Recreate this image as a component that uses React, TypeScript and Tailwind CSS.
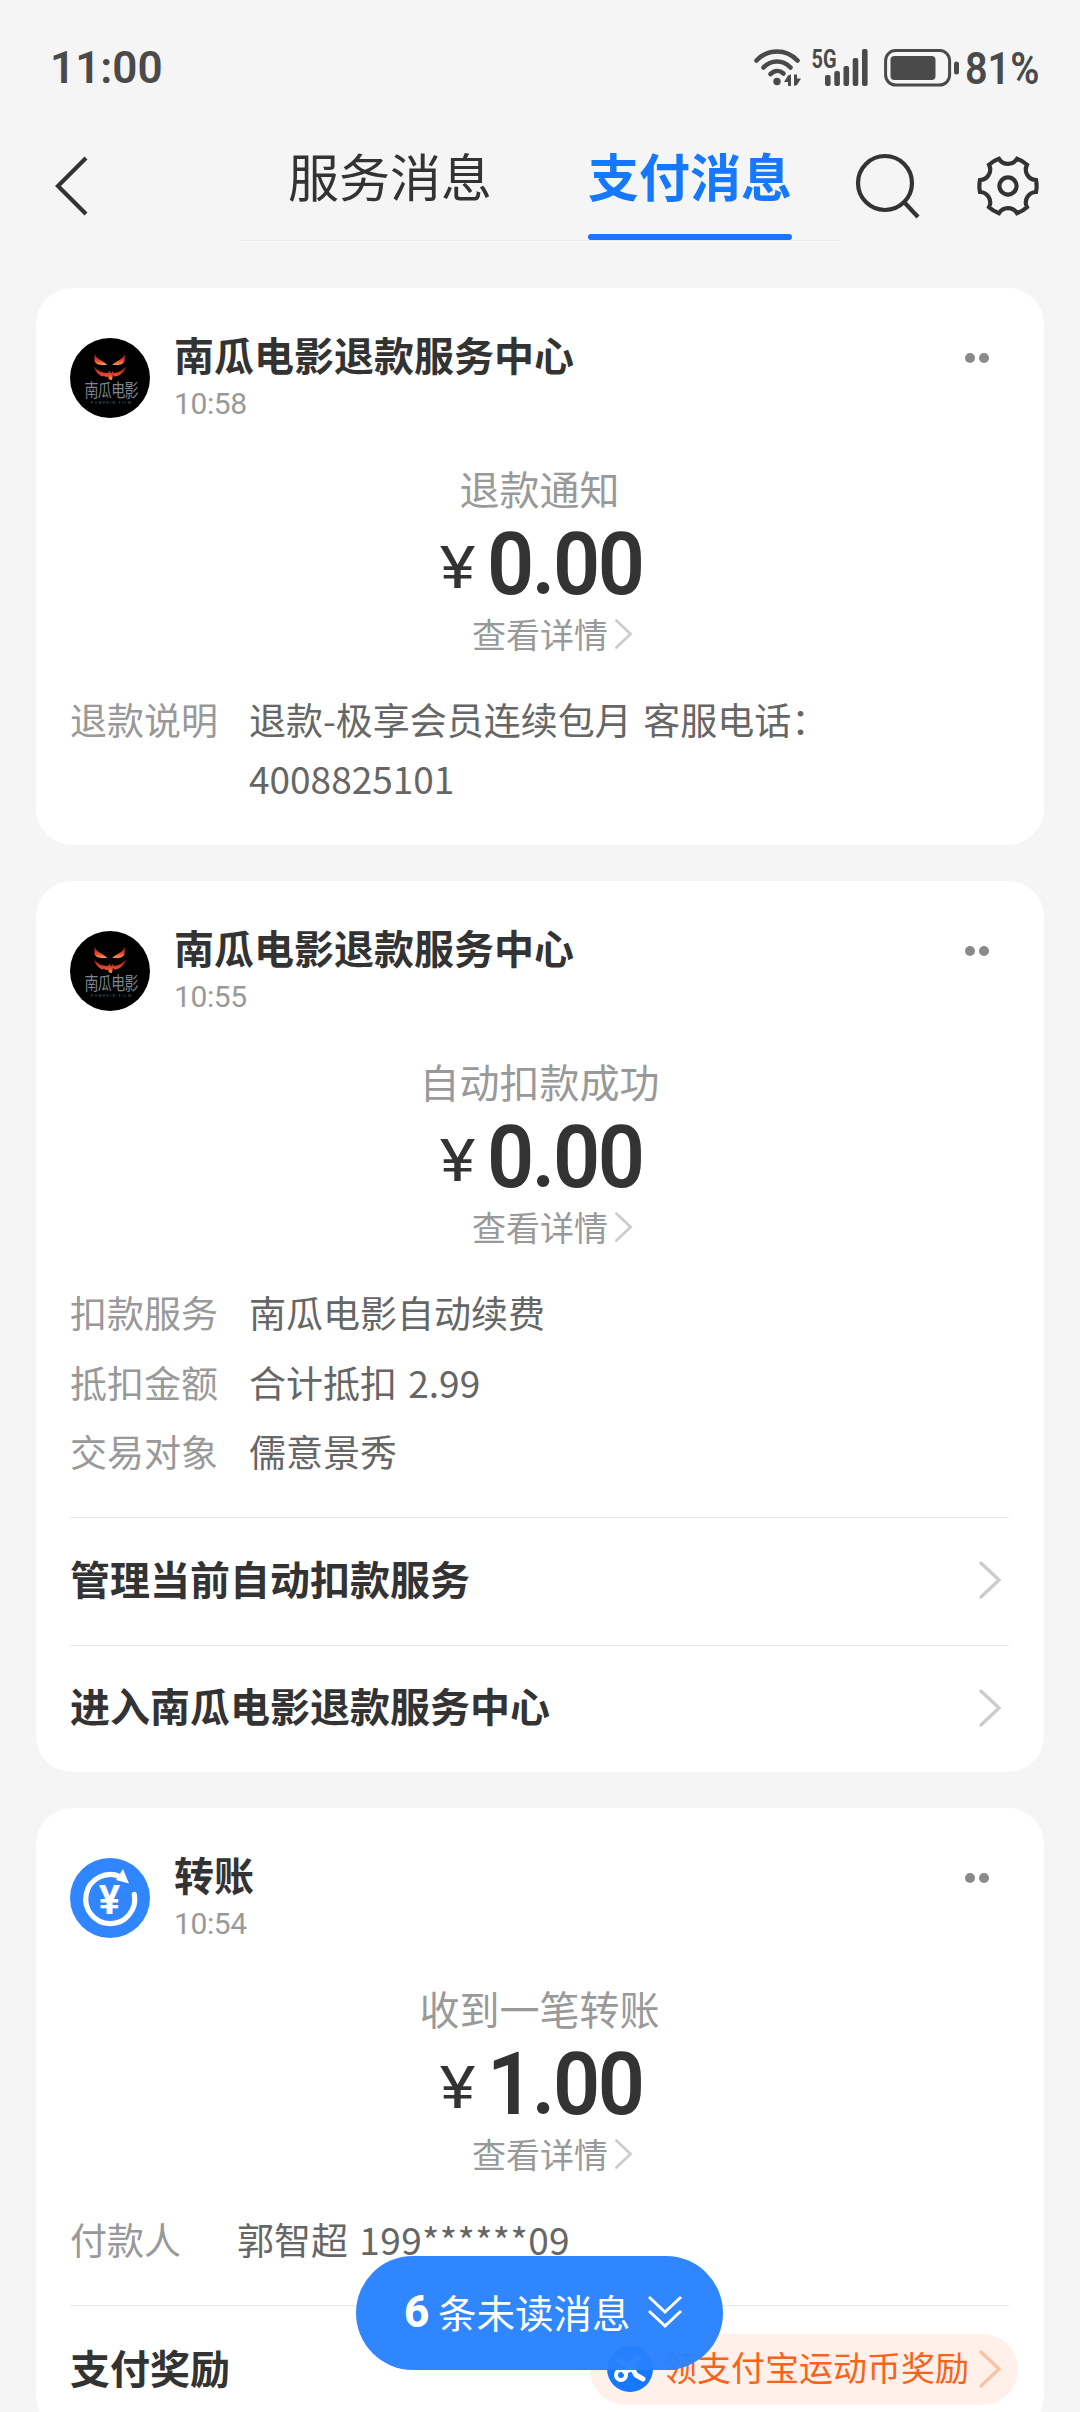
import type { ReactNode } from "react";

type Detail = { label: string; value: string };

type MessageCardProps = {
  icon: ReactNode;
  title: string;
  time: string;
  subject: string;
  amount: string;
  children: ReactNode;
};

function StatusBar() {
  return (
    <div className="flex h-[136px] items-center pl-[50px] text-[#4a4a4a]">
      <span className="w-[703px] font-['Roboto'] text-[44px] leading-none font-semibold">
        11:00
      </span>
      <svg className="h-[40px] w-[48px]" viewBox="0 0 48 40" fill="none">
        <g stroke="currentColor" strokeWidth="4.6" strokeLinecap="round">
          <path d="M3.5 12.5C15 0.5 33 0.5 44.5 12.5" />
          <path d="M10.5 19.5C18 11.5 30 11.5 37.5 19.5" />
          <path d="M17.5 26C21.5 22 26.5 22 30.5 25.5" />
        </g>
        <circle cx="24" cy="33.5" r="3.7" fill="currentColor" />
        <path d="M38 26.5V38H35V34H31L35 27.5Z" fill="currentColor" />
        <path d="M41 26.5H44V30.5H48L44 37L41 38Z" fill="currentColor" />
      </svg>
      <svg className="ml-[10px] h-[40px] w-[58px] overflow-visible" viewBox="0 0 58 40">
        <text
          x="0.5"
          y="19.5"
          textLength="25"
          lengthAdjust="spacingAndGlyphs"
          className="fill-current font-['Roboto'] text-[25px] font-bold"
        >
          5G
        </text>
        <g fill="currentColor">
          <rect x="14" y="27" width="5.6" height="11" rx="2" />
          <rect x="23.3" y="23" width="5.6" height="15" rx="2" />
          <rect x="32.5" y="18" width="5.6" height="20" rx="2" />
          <rect x="41.7" y="10" width="5.6" height="28" rx="2" />
          <rect x="51" y="1" width="5.6" height="37" rx="2" />
        </g>
      </svg>
      <svg className="ml-[15px] h-[38px] w-[76px]" viewBox="0 0 76 38">
        <rect
          x="1.6"
          y="1.6"
          width="64"
          height="34.4"
          rx="10"
          fill="none"
          stroke="currentColor"
          strokeWidth="3"
        />
        <rect x="6.5" y="7" width="45" height="24" rx="4" fill="currentColor" />
        <rect x="70" y="12.5" width="5" height="13" rx="2.5" fill="currentColor" />
      </svg>
      <span className="ml-[5px] origin-left scale-x-88 font-['Roboto'] text-[45px] leading-none font-semibold">
        81%
      </span>
    </div>
  );
}

function NavBar() {
  return (
    <div className="flex h-[105px] text-[#333333]">
      <svg
        className="mt-[20px] ml-[49px] h-[60px] w-[40px]"
        viewBox="0 0 40 60"
        fill="none"
        stroke="currentColor"
        strokeWidth="4.2"
      >
        <path d="M37 2L9 30L37 58" />
      </svg>
      <div className="ml-[151px] grid w-[600px] grid-cols-2 border-b border-[#ececec] text-center text-[51px] leading-[78px]">
        <div className="whitespace-nowrap">服务消息</div>
        <div className="flex flex-col items-center justify-between font-bold text-[#1677ff]">
          <span className="whitespace-nowrap">支付消息</span>
          <span className="h-[6px] w-[204px] rounded-full bg-[#1677ff]" />
        </div>
      </div>
      <svg
        className="mt-[15px] ml-[14px] h-[70px] w-[70px]"
        viewBox="0 0 70 70"
        fill="none"
        stroke="currentColor"
        strokeWidth="4.2"
      >
        <circle cx="31" cy="32" r="27" />
        <path d="M50 51L64 66" />
      </svg>
      <svg
        className="mt-[18px] ml-[52px] h-[64px] w-[64px]"
        viewBox="-32 -32 64 64"
        fill="none"
        stroke="currentColor"
        strokeWidth="4.2"
      >
        <path d="M-9-27.2A10.5 10.5 0 0 0 9-27.2A29 29 0 0 1 19-21.3A10.5 10.5 0 0 0 28-6A29 29 0 0 1 28 6A10.5 10.5 0 0 0 19 21.3A29 29 0 0 1 9 27.2A10.5 10.5 0 0 0-9 27.2A29 29 0 0 1-19 21.3A10.5 10.5 0 0 0-28 6A29 29 0 0 1-28-6A10.5 10.5 0 0 0-19-21.3A29 29 0 0 1-9-27.2Z" />
        <circle r="8.6" />
      </svg>
    </div>
  );
}

function PumpkinIcon() {
  return (
    <svg className="size-[80px]" viewBox="0 0 80 80">
      <defs>
        <linearGradient id="flame" x1="0" y1="0" x2="0" y2="1">
          <stop offset="0" stopColor="#8f1a12" />
          <stop offset="0.6" stopColor="#e8432a" />
          <stop offset="1" stopColor="#f59a52" />
        </linearGradient>
      </defs>
      <circle cx="40" cy="40" r="40" fill="#000000" />
      <g fill="url(#flame)">
        <path d="M24.5 15.5C26 21 32 22 37.5 27C33 27 26 27.5 24.5 23Z" />
        <path d="M55 15.5C53.5 21 48 22 42 27C47 27 53 27.5 54.5 23Z" />
        <path d="M24 28.5C29 34.5 35 35 38 35L39.5 32.5L41 35.5L42.5 33L43.5 35C48 34.5 52 33 56 28.5C54 35.5 48 38.5 44 38.5L43 36.5L42 42L39 41.5L38 38.5L35.5 39L34 37.5L32.5 38.5C28 36.5 25.5 34 24 28.5Z" />
      </g>
      <text
        x="14.5"
        y="46"
        transform="scale(1 1.28)"
        textLength="54"
        className="fill-[#7b8790] font-['Noto_Sans_CJK_SC'] text-[14px]"
      >
        南瓜电影
      </text>
      <text
        x="21"
        y="66"
        textLength="40"
        className="fill-[#5c6367] font-['Roboto'] text-[3.5px]"
      >
        PUMPKIN FILM
      </text>
    </svg>
  );
}

function TransferIcon() {
  return (
    <svg className="size-[80px]" viewBox="0 0 80 80" fill="none">
      <circle cx="40" cy="40" r="40" fill="#2f86ff" />
      <path
        d="M64.3 36.5A24.5 24.5 0 1 1 50 18.6"
        stroke="#ffffff"
        strokeWidth="5.2"
        strokeLinecap="round"
      />
      <path d="M53 11L59 25.5L46 22Z" fill="#ffffff" />
      <text
        x="39.5"
        y="55.500"
        textAnchor="middle"
        className="fill-white font-['Roboto'] text-[40px] font-bold"
      >
        ¥
      </text>
    </svg>
  );
}

function Chevron({ className }: { className: string }) {
  return (
    <svg
      className={className}
      viewBox="0 0 24 40"
      fill="none"
      stroke="currentColor"
      strokeWidth="3.4"
      strokeLinecap="round"
    >
      <path d="M3 3L21 20L3 37" />
    </svg>
  );
}

function MessageCard({ icon, title, time, subject, amount, children }: MessageCardProps) {
  return (
    <section className="rounded-[36px] bg-white pr-[35px] pl-[34px]">
      <header className="flex h-[130px] items-end">
        {icon}
        <div className="ml-[24px] flex-1">
          <h2 className="mb-[7px] text-[40px] leading-[50px] font-bold text-[#333333]">
            {title}
          </h2>
          <p className="mb-[-4px] font-['Roboto'] text-[30px] leading-[36px] tracking-[-0.4px] text-[#999999]">
            {time}
          </p>
        </div>
        <div className="mr-[20px] mb-[55px] flex gap-[4px]">
          <i className="size-[10px] rounded-full bg-[#8a8a8a]" />
          <i className="size-[10px] rounded-full bg-[#8a8a8a]" />
        </div>
      </header>

      <div className="mt-[40px] flex flex-col items-center">
        <p className="text-[40px] leading-[60px] text-[#999999]">{subject}</p>
        <div className="flex h-[88px] items-center gap-[14px] font-['Roboto'] text-[#333333]">
          <span className="mt-[10px] ml-[10px] scale-x-115 text-[59px] leading-none">¥</span>
          <span className="mt-[4px] -mr-[3px] origin-left scale-x-95 text-[87px] leading-[84px] font-semibold tracking-[-2.5px]">
            {amount}
          </span>
        </div>
        <p className="ml-[26px] flex items-center text-[34px] leading-[56px] text-[#999999]">
          查看详情
          <Chevron className="ml-[6px] h-[32px] w-[19px] text-[#cccccc]" />
        </p>
      </div>

      {children}
    </section>
  );
}

function DetailList({ items }: { items: Detail[] }) {
  return (
    <dl className="mt-[28px] flex flex-col gap-[11px] text-[37px] leading-[58.5px] [word-spacing:3px]">
      {items.map((item) => (
        <div key={item.label} className="flex">
          <dt className="w-[179px] shrink-0 text-[#999999]">{item.label}</dt>
          <dd className="w-[620px] text-[#666666]">{item.value}</dd>
        </div>
      ))}
    </dl>
  );
}

function LinkRow({ label }: { label: string }) {
  return (
    <div className="flex h-[127.5px] items-center justify-between border-t border-[#e8e8e8] pr-[7px] pb-[2px] text-[40px] font-bold text-[#333333]">
      <span className="mb-[5px]">{label}</span>
      <Chevron className="h-[40px] w-[24px] text-[#cccccc]" />
    </div>
  );
}

function RewardPill() {
  return (
    <div className="mr-[-9px] flex h-[71px] w-[428px] items-center rounded-full bg-[#fff1e9] pl-[17px] text-[34px] font-normal text-[#f7631b]">
      <svg className="size-[46px]" viewBox="0 0 46 46" fill="none">
        <circle cx="23" cy="23" r="23" fill="#1677ff" />
        <g stroke="#ffffff" strokeLinecap="round" strokeLinejoin="round">
          <circle cx="14" cy="29" r="5" strokeWidth="4" />
          <path d="M11 15L21 19L27 16M18 26L25 22L29 29L36 33" strokeWidth="5" />
        </g>
        <circle cx="31" cy="12" r="3.5" fill="#ffffff" />
      </svg>
      <span className="mb-[5px] ml-[10px] whitespace-nowrap">领支付宝运动币奖励</span>
      <Chevron className="ml-[9px] h-[40px] w-[24px] text-[#f9c3a6]" />
    </div>
  );
}

function UnreadButton() {
  return (
    <button className="absolute top-[2256px] left-[356px] flex h-[114px] w-[367px] items-center rounded-full bg-[#2881ff]/96 pb-[2px] pl-[48px] text-[38.5px] text-white">
      <span className="w-[34px] text-left font-['Roboto'] text-[44px] font-extrabold">6</span>
      <span className="whitespace-nowrap">条未读消息</span>
      <svg
        className="ml-[15px] h-[36px] w-[38px]"
        viewBox="0 0 38 36"
        fill="none"
        stroke="currentColor"
        strokeWidth="3"
      >
        <path d="M3 3L19 18L35 3M3 17L19 32L35 17" />
      </svg>
    </button>
  );
}

export default function App() {
  return (
    <div className="relative h-[2412px] w-[1080px] overflow-hidden bg-[#f5f5f5] font-['Noto_Sans_CJK_SC',sans-serif]">
      <StatusBar />
      <NavBar />

      <main className="mx-[36px] mt-[47px] flex flex-col gap-[36px]">
        <MessageCard
          icon={<PumpkinIcon />}
          title="南瓜电影退款服务中心"
          time="10:58"
          subject="退款通知"
          amount="0.00"
        >
          <div className="pb-[38px]">
            <DetailList
              items={[
                { label: "退款说明", value: "退款-极享会员连续包月 客服电话：4008825101" },
              ]}
            />
          </div>
        </MessageCard>

        <MessageCard
          icon={<PumpkinIcon />}
          title="南瓜电影退款服务中心"
          time="10:55"
          subject="自动扣款成功"
          amount="0.00"
        >
          <div className="pb-[36.5px]">
            <DetailList
              items={[
                { label: "扣款服务", value: "南瓜电影自动续费" },
                { label: "抵扣金额", value: "合计抵扣 2.99" },
                { label: "交易对象", value: "儒意景秀" },
              ]}
            />
          </div>
          <LinkRow label="管理当前自动扣款服务" />
          <LinkRow label="进入南瓜电影退款服务中心" />
        </MessageCard>

        <MessageCard
          icon={<TransferIcon />}
          title="转账"
          time="10:54"
          subject="收到一笔转账"
          amount="1.00"
        >
          <div className="mt-[28px] mb-[36.5px] flex text-[37px] leading-[58.5px] text-[#666666] [word-spacing:3px]">
            <span className="w-[167px] text-[#999999]">付款人</span>
            <span>
              郭智超 <span className="tracking-[0.4px]">199******09</span>
            </span>
          </div>
          <div className="flex h-[127px] items-center justify-between border-t border-[#e8e8e8] text-[40px] font-bold text-[#333333]">
            <span className="mb-[5px]">支付奖励</span>
            <RewardPill />
          </div>
        </MessageCard>
      </main>

      <UnreadButton />
    </div>
  );
}
